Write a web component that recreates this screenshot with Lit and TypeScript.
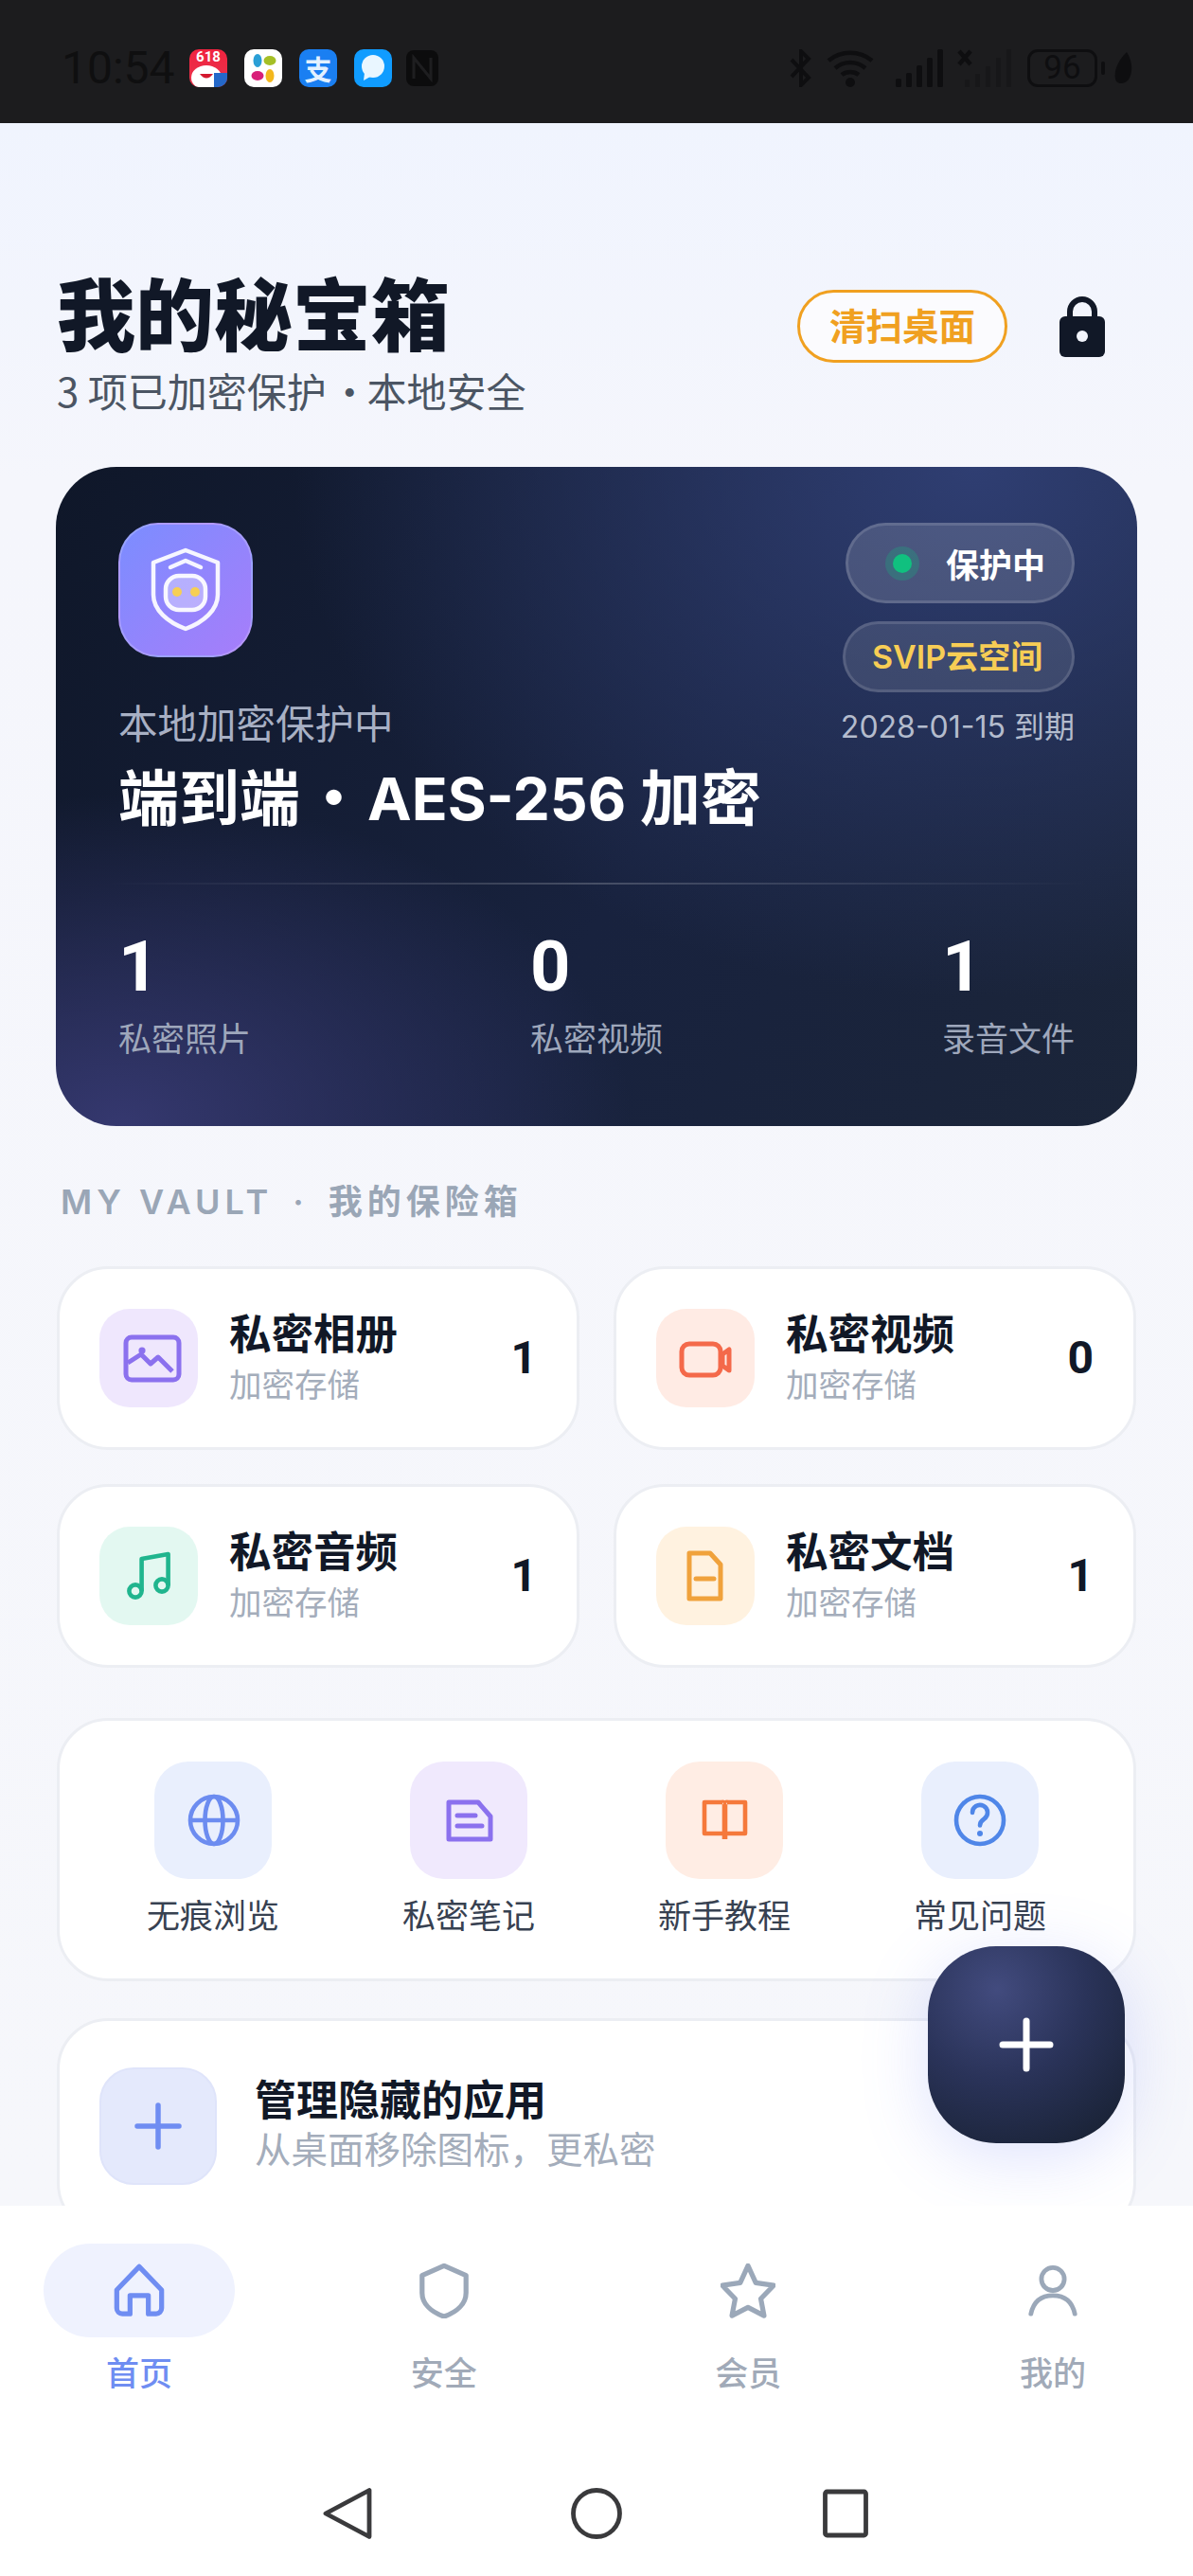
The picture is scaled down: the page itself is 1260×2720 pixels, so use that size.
import { LitElement, html, css } from "lit";
import { customElement } from "lit/decorators.js";

const vaultCards = [
  { name: "私密相册", count: "1", bg: "#efe7fd", icon: html`<svg viewBox="0 0 104 104" fill="none" stroke="#8b71ee" stroke-width="5" stroke-linejoin="round" stroke-linecap="round"><rect x="28" y="30" width="56" height="45" rx="6"/><path d="M30 57 44 48l10 10 8-7 15 15" stroke-linecap="butt"/><circle cx="45" cy="44" r="3.6" fill="#8b71ee" stroke="none"/></svg>` },
  { name: "私密视频", count: "0", bg: "#ffebe4", icon: html`<svg viewBox="0 0 104 104" fill="none" stroke="#f4694a" stroke-width="5" stroke-linejoin="round"><rect x="27" y="37" width="41" height="33" rx="8"/><path d="M70 48l7-5v22l-7-5z"/></svg>` },
  { name: "私密音频", count: "1", bg: "#e3f8f1", icon: html`<svg viewBox="0 0 104 104" fill="none" stroke="#20b58e" stroke-width="4.6" stroke-linejoin="round"><circle cx="38" cy="68" r="6.6"/><circle cx="66" cy="62" r="6.6"/><path d="M44.6 68V34L72.6 29V62"/></svg>` },
  { name: "私密文档", count: "1", bg: "#fff2e0", icon: html`<svg viewBox="0 0 104 104" fill="none" stroke="#f0a23c" stroke-width="5" stroke-linejoin="round"><path d="M35 28H57L68 40V76H35Z"/><path d="M42 55H61" stroke-linecap="round"/></svg>` },
];

const quickItems = [
  { name: "无痕浏览", bg: "#e9effd", icon: html`<svg viewBox="0 0 124 124" fill="none" stroke="#6c8cf0" stroke-width="4.6"><circle cx="63" cy="62" r="25"/><ellipse cx="63" cy="62" rx="9.5" ry="25"/><path d="M38 62H88"/></svg>` },
  { name: "私密笔记", bg: "#f0e9fd", icon: html`<svg viewBox="0 0 124 124" fill="none" stroke="#8b71ee" stroke-width="5" stroke-linejoin="round" stroke-linecap="round"><path d="M41 43H72L85 58V82H41Z"/><path d="M50 57H69M50 68H76"/></svg>` },
  { name: "新手教程", bg: "#ffede4", icon: html`<svg viewBox="0 0 124 124" fill="none" stroke="#f5793b" stroke-width="4.6" stroke-linejoin="round"><path d="M60 43H41V76H60"/><path d="M65 43H84V76H65"/><path d="M60 43Q62 42 62 46V82M65 43Q63 42 63 46V82"/></svg>` },
  { name: "常见问题", bg: "#e9effd", icon: html`<svg viewBox="0 0 124 124" fill="none" stroke="#4f86e8" stroke-width="4.6" stroke-linecap="round"><circle cx="62" cy="62" r="25"/><path d="M54 54a8 8 0 1 1 12.5 6.5c-3 2-4.5 3.5-4.5 7"/><circle cx="62" cy="76" r="3" fill="#4f86e8" stroke="none"/></svg>` },
];

const navItems = [
  { name: "首页", active: true, icon: html`<svg viewBox="0 0 60 60" fill="none" stroke="#6f8df2" stroke-width="5.4" stroke-linejoin="round"><path d="M30 3.5 5.5 29V49a6 6 0 0 0 6 6H20V35H40V55h8.5a6 6 0 0 0 6-6V29Z"/></svg>` },
  { name: "安全", active: false, icon: html`<svg viewBox="0 0 60 60" fill="none" stroke="#9ba8b9" stroke-width="5.4" stroke-linejoin="round"><path d="M30 2.5 6 13V32c0 12 10 21 24 26 14-5 24-14 24-26V13Z"/></svg>` },
  { name: "会员", active: false, icon: html`<svg viewBox="0 0 60 60" fill="none" stroke="#9ba8b9" stroke-width="5.4" stroke-linejoin="round"><path d="M30 2.5 38.5 21 58 24 44 38.5 47.5 57 30 48 12.5 57 16 38.5 2 24 21.5 21Z"/></svg>` },
  { name: "我的", active: false, icon: html`<svg viewBox="0 0 60 60" fill="none" stroke="#9ba8b9" stroke-width="5" stroke-linecap="round"><circle cx="30" cy="17" r="12.5"/><path d="M6 55C9 41 18 35 30 35S51 41 54 55"/></svg>` },
];

@customElement("app-root")
export class AppRoot extends LitElement {
  static styles = css`
    :host {
      display: flex;
      flex-direction: column;
      position: relative;
      width: 1260px;
      height: 2720px;
      overflow: hidden;
      font-family: Inter, "Noto Sans CJK SC", sans-serif;
      color: #111827;
      background: #fff;
    }
    svg { display: block; }

    /* status bar */
    .status {
      flex: 0 0 130px;
      height: 130px;
      background: #1c1c1e;
      display: flex;
      align-items: center;
      justify-content: space-between;
      padding: 14px 64px 0 65px;
      box-sizing: border-box;
    }
    .st-left, .st-right { display: flex; align-items: center; }
    .time {
      font: 400 48px/56px Roboto, sans-serif;
      color: #0f0f10;
      width: 135px;
      white-space: nowrap;
    }
    .apps { display: flex; gap: 18px; }
    .app {
      width: 40px; height: 40px; border-radius: 10px;
      position: relative;
      display: flex; align-items: center; justify-content: center;
      overflow: hidden;
    }
    .app.red {
      background: linear-gradient(180deg, #f0233f, #e8344d);
      font: 700 15px/17px Roboto, sans-serif;
      color: #fff;
      align-items: flex-start;
    }
    .bear { position: absolute; left: 0; top: 15px; }
    .app.white { background: #fff; }
    .app.blue { background: #1a7ff2; font: 700 29px/38px "Noto Sans CJK SC", sans-serif; color: #e3f1ff; }
    .app.sky { background: #109cff; }
    .nfc { margin-left: 14px; width: 36px; height: 40px; }
    .st-bt { width: 23px; height: 40px; }
    .st-wifi { width: 50px; height: 40px; margin-left: 16px; }
    .st-sig { width: 50px; height: 40px; margin-left: 23px; }
    .st-sig2 { width: 58px; height: 40px; margin-left: 15px; }
    .battery {
      width: 74px; height: 40px; margin-left: 16px;
      box-sizing: border-box;
      border: 3px solid #0e0e10;
      border-radius: 11px;
      font: 400 35px/34px Roboto, sans-serif;
      text-align: center;
      color: #0e0e10;
    }
    .nub { width: 4px; height: 14px; background: #0e0e10; margin-left: 4px; border-radius: 2px; }
    .leaf { width: 20px; height: 36px; margin-left: 9px; }

    /* scrolling content */
    .content {
      flex: 1 1 0;
      min-height: 0;
      overflow: hidden;
      box-sizing: border-box;
      padding: 153px 60px 0;
      background: linear-gradient(180deg, #f0f4fe 0, #f5f6fc 380px, #f6f7fb 100%);
    }
    .head { display: flex; justify-content: space-between; }
    h1 {
      margin: 0;
      font: 900 83px/90px "Noto Sans CJK SC", sans-serif;
      color: #111827;
    }
    .subtitle {
      margin-top: 14px;
      font: 400 42px/50px "Noto Sans CJK SC", sans-serif;
      color: #4b5563;
    }
    .sep { letter-spacing: -6px; }
    .head-actions { display: flex; align-items: center; height: 77px; margin: 23px 33px 0 0; }
    .clean {
      box-sizing: border-box;
      width: 222px; height: 77px;
      border: 3.5px solid #f0a020;
      border-radius: 39px;
      background: #fbfbfe;
      color: #f0a020;
      font: 700 38.5px/66px "Noto Sans CJK SC", sans-serif;
      text-align: center;
    }
    .lock { width: 48px; height: 64px; margin-left: 55px; }

    /* hero */
    .hero {
      margin: 56px -1px 0;
      height: 696px;
      box-sizing: border-box;
      padding: 59px 66px 0;
      border-radius: 64px;
      color: #fff;
      background:
        radial-gradient(720px 560px at 85% 0%, #2f3e72 0%, rgba(47,62,114,0) 100%),
        radial-gradient(540px 350px at 6% 100%, #35386f 0%, rgba(53,56,111,0) 100%),
        linear-gradient(120deg, #0f1729 0%, #18223e 55%, #1b2539 100%);
    }
    .hero-top { display: flex; justify-content: space-between; }
    .shield {
      box-sizing: border-box;
      width: 142px; height: 142px; border-radius: 42px;
      background: linear-gradient(135deg, #7b8dff, #a77dfa);
      border: 2px solid rgba(255,255,255,.2);
    }
    .h-sub {
      margin-top: 43px;
      font: 400 41.5px/50px "Noto Sans CJK SC", sans-serif;
      color: #a8b0c4;
    }
    .h-title {
      margin-top: 11px;
      font: 700 64px/80px "Noto Sans CJK SC", sans-serif;
      white-space: nowrap;
    }
    .latin { font: 700 62.5px/80px Inter, sans-serif; }
    .h-sep { margin: 0 -11px; }
    .hero-right { display: flex; flex-direction: column; align-items: flex-end; }
    .pill {
      box-sizing: border-box;
      display: flex; align-items: center;
      border-radius: 44px;
      border: 3px solid rgba(255,255,255,.13);
      white-space: nowrap;
    }
    .pill.safe {
      width: 242px; height: 85px; padding-left: 39px;
      background: rgba(255,255,255,.15);
      font: 600 35px/40px "Noto Sans CJK SC", sans-serif;
      color: #fff;
    }
    .dot {
      width: 20px; height: 20px; border-radius: 50%;
      background: #10c07f;
      box-shadow: 0 0 0 8px rgba(16,192,127,.25);
      margin: 0 36px 0 8px;
    }
    .pill.svip {
      margin-top: 19px;
      width: 245px; height: 75px; padding-left: 28px;
      background: rgba(255,255,255,.11);
      color: #f7cd55;
      font: 600 34px/40px Inter, "Noto Sans CJK SC", sans-serif;
    }
    .date {
      margin-top: 14px;
      font: 400 32px/46px Inter, "Noto Sans CJK SC", sans-serif;
      color: #b4bccd;
      white-space: nowrap;
    }
    .divider {
      margin: 49px -16px 0 -14px;
      height: 2px;
      background: linear-gradient(90deg, rgba(255,255,255,0), rgba(255,255,255,.2) 50%, rgba(255,255,255,0));
    }
    .stats { display: flex; justify-content: space-between; margin-top: 47px; }
    .num { font: 700 74px/80px Roboto, sans-serif; color: #fff; }
    .lbl { margin-top: 12px; font: 400 35px/44px "Noto Sans CJK SC", sans-serif; color: #9ea7bb; }

    /* vault */
    .section {
      margin: 58px 4px 0;
      font: 600 36px/44px Inter, "Noto Sans CJK SC", sans-serif;
      color: #9aa6b6;
      letter-spacing: 5px;
      white-space: nowrap;
    }
    .s-sep { margin: 0 7px; }
    .grid { margin-top: 46px; display: grid; grid-template-columns: 552px 552px; gap: 36px; }
    .card, .panel, .manage {
      background: #fff;
      border: 3px solid #eceef3;
      box-sizing: border-box;
      border-radius: 54px;
    }
    .card { height: 194px; display: flex; align-items: center; padding: 0 42px 0 42px; }
    .tile { flex: none; }
    .tile.s { width: 104px; height: 104px; border-radius: 32px; }
    .tile.l { width: 124px; height: 124px; border-radius: 36px; }
    .c-text { margin-left: 33px; flex: 1; padding-bottom: 5px; }
    .c-name { font: 600 44.5px/56px "Noto Sans CJK SC", sans-serif; color: #111827; }
    .c-sub { font: 400 34.5px/52px "Noto Sans CJK SC", sans-serif; color: #a4adbb; }
    .c-count { font: 700 48px/50px Roboto, sans-serif; color: #111827; }

    .panel {
      margin-top: 53px;
      height: 278px;
      padding-top: 43px;
      display: grid;
      grid-template-columns: repeat(4, 270px);
      justify-content: center;
    }
    .q { display: flex; flex-direction: column; align-items: center; }
    .q-name { margin-top: 15px; font: 400 35px/44px "Noto Sans CJK SC", sans-serif; color: #374151; }

    .manage {
      margin-top: 39px;
      display: flex;
      align-items: center;
      padding: 49px 42px;
    }
    .tile.plus { background: #e4e9fc; border: 2px solid #dfe4fa; box-sizing: border-box; }
    .m-text { margin-left: 40px; padding-bottom: 10px; }
    .m-name { font: 600 44px/54px "Noto Sans CJK SC", sans-serif; color: #111827; }
    .m-sub { font: 400 38.5px/50px "Noto Sans CJK SC", sans-serif; color: #a4adbb; }

    /* fab */
    .fab {
      position: absolute;
      left: 980px; top: 2055px;
      width: 208px; height: 208px;
      border-radius: 72px;
      background: radial-gradient(circle at 35% 22%, #424b7e 0%, #2a3359 45%, #1b2439 85%);
      box-shadow: 0 14px 70px rgba(105,125,245,.22);
      display: flex; align-items: center; justify-content: center;
    }
    .fab svg { width: 58px; height: 58px; }

    /* bottom */
    .bottom { flex: 0 0 391px; background: #fff; position: relative; }
    .nav { display: flex; justify-content: space-between; padding: 40px 47px 0 46px; }
    .nav-item { width: 202px; display: flex; flex-direction: column; align-items: center; }
    .nav-ic {
      width: 202px; height: 99px;
      border-radius: 50px;
      display: flex; align-items: center; justify-content: center;
    }
    .nav-ic svg { width: 58px; height: 58px; }
    .nav-item.active .nav-ic { background: #eff2fe; }
    .nav-name { margin-top: 14px; font: 500 35px/44px "Noto Sans CJK SC", sans-serif; color: #a1aab8; }
    .nav-item.active .nav-name { color: #6f8df2; }
    .sys { display: flex; justify-content: center; gap: 203px; margin-top: 101px; }
    .sys svg { width: 60px; height: 54px; }
  `;

  private statusBar() {
    return html`
      <div class="status">
        <div class="st-left">
          <div class="time">10:54</div>
          <div class="apps">
            <div class="app red">618
              <svg class="bear" width="40" height="25" viewBox="0 0 40 25"><ellipse cx="18" cy="15" rx="16" ry="13" fill="#fff"/><path d="M11 11q7 9 14 0z" fill="#d3182f"/><rect x="26" y="10" width="14" height="15" fill="#2468c9"/></svg>
            </div>
            <div class="app white">
              <svg width="34" height="34" viewBox="0 0 34 34"><ellipse cx="11" cy="9" rx="4.5" ry="7" fill="#2a9fd6"/><ellipse cx="24" cy="9" rx="6.5" ry="5" fill="#a5bf26"/><ellipse cx="11" cy="25" rx="6.5" ry="5" fill="#d81f78"/><ellipse cx="24" cy="25" rx="4.5" ry="7" fill="#f3b71c"/></svg>
            </div>
            <div class="app blue">支</div>
            <div class="app sky">
              <svg width="34" height="34" viewBox="0 0 34 34"><circle cx="17" cy="15" r="12" fill="#e9f6ff"/><path d="M8 22l-1 8 7-4z" fill="#e9f6ff"/></svg>
            </div>
          </div>
          <svg class="nfc" viewBox="0 0 36 40"><rect x="1" y="1" width="34" height="38" rx="8" fill="#0c0c0d"/><path d="M9 31V9l18 22V9" fill="none" stroke="#1e1e20" stroke-width="3"/></svg>
        </div>
        <div class="st-right">
          <svg class="st-bt" viewBox="0 0 23 40" fill="none" stroke="#0e0e10" stroke-width="4"><path d="M2 11 20 30 12 38V2L20 10 2 29"/></svg>
          <svg class="st-wifi" viewBox="0 0 50 40" fill="none" stroke="#0e0e10" stroke-width="4.5"><path d="M2 12C15 1 35 1 48 12M9 20C18 12 32 12 41 20M16 27C21 23 29 23 34 27"/><circle cx="25" cy="35" r="5" fill="#0e0e10" stroke="none"/></svg>
          <svg class="st-sig" viewBox="0 0 50 40" fill="#0e0e10"><rect x="0" y="31" width="6" height="9" rx="1.5"/><rect x="11" y="25" width="6" height="15" rx="1.5"/><rect x="22" y="17" width="6" height="23" rx="1.5"/><rect x="33" y="9" width="6" height="31" rx="1.5"/><rect x="44" y="0" width="6" height="40" rx="1.5"/></svg>
          <svg class="st-sig2" viewBox="0 0 58 40"><path d="M2 2l12 14M14 2 2 16" stroke="#0e0e10" stroke-width="4.5"/><g fill="#171719"><rect x="8" y="32" width="5" height="8"/><rect x="19" y="26" width="5" height="14"/><rect x="30" y="18" width="5" height="22"/><rect x="41" y="9" width="5" height="31"/><rect x="52" y="0" width="5" height="40"/></g></svg>
          <div class="battery">96</div>
          <div class="nub"></div>
          <svg class="leaf" viewBox="0 0 20 36"><path d="M14 1C20 10 21 22 16 30 12 35 6 35 3 32 -1 24 4 10 14 1Z" fill="#0e0e10"/></svg>
        </div>
      </div>
    `;
  }

  private hero() {
    return html`
      <section class="hero">
        <div class="hero-top">
          <div>
            <div class="shield">
              <svg viewBox="2 2 138 138" width="138" height="138" fill="none" stroke="#fff" stroke-opacity=".92" stroke-width="4.5" stroke-linecap="round" stroke-linejoin="round">
                <path d="M71 29 37 42V76C37 92 52 105 71 112 90 105 105 92 105 76V42Z"/>
                <path d="M55 47 71 40 87 47"/>
                <rect x="50" y="56" width="42" height="36" rx="14" fill="#fff" fill-opacity=".35"/>
                <circle cx="62" cy="73" r="5" fill="#f6cf54" stroke="none"/>
                <circle cx="81" cy="73" r="5" fill="#f6cf54" stroke="none"/>
              </svg>
            </div>
            <div class="h-sub">本地加密保护中</div>
            <div class="h-title">端到端<span class="h-sep"> · </span><span class="latin">AES-256</span> 加密</div>
          </div>
          <div class="hero-right">
            <div class="pill safe"><span class="dot"></span>保护中</div>
            <div class="pill svip">SVIP云空间</div>
            <div class="date">2028-01-15 到期</div>
          </div>
        </div>
        <div class="divider"></div>
        <div class="stats">
          <div><div class="num">1</div><div class="lbl">私密照片</div></div>
          <div><div class="num">0</div><div class="lbl">私密视频</div></div>
          <div><div class="num">1</div><div class="lbl">录音文件</div></div>
        </div>
      </section>
    `;
  }

  render() {
    return html`
      ${this.statusBar()}
      <main class="content">
        <header class="head">
          <div>
            <h1>我的秘宝箱</h1>
            <div class="subtitle">3 项已加密保护<span class="sep"> · </span>本地安全</div>
          </div>
          <div class="head-actions">
            <div class="clean">清扫桌面</div>
            <svg class="lock" viewBox="0 0 48 64"><path d="M11 24V16a13 13 0 0 1 26 0V24" fill="none" stroke="#111827" stroke-width="6"/><rect x="0" y="21" width="48" height="43" rx="6" fill="#111827"/><circle cx="24" cy="42" r="6" fill="#f2f4fb"/></svg>
          </div>
        </header>

        ${this.hero()}

        <div class="section">MY VAULT<span class="s-sep"> · </span>我的保险箱</div>
        <div class="grid">
          ${vaultCards.map(c => html`
            <div class="card">
              <div class="tile s" style="background:${c.bg}">${c.icon}</div>
              <div class="c-text">
                <div class="c-name">${c.name}</div>
                <div class="c-sub">加密存储</div>
              </div>
              <div class="c-count">${c.count}</div>
            </div>
          `)}
        </div>

        <div class="panel">
          ${quickItems.map(q => html`
            <div class="q">
              <div class="tile l" style="background:${q.bg}">${q.icon}</div>
              <div class="q-name">${q.name}</div>
            </div>
          `)}
        </div>

        <div class="manage">
          <div class="tile l plus">
            <svg viewBox="0 0 120 120" fill="none" stroke="#6f8df2" stroke-width="5.5" stroke-linecap="round"><path d="M60 38V82M38 60H82"/></svg>
          </div>
          <div class="m-text">
            <div class="m-name">管理隐藏的应用</div>
            <div class="m-sub">从桌面移除图标，更私密</div>
          </div>
        </div>
      </main>

      <div class="fab">
        <svg viewBox="0 0 58 58" fill="none" stroke="#fff" stroke-width="7" stroke-linecap="round"><path d="M29 4V54M4 29H54"/></svg>
      </div>

      <footer class="bottom">
        <nav class="nav">
          ${navItems.map(n => html`
            <div class="nav-item ${n.active ? "active" : ""}">
              <div class="nav-ic">${n.icon}</div>
              <div class="nav-name">${n.name}</div>
            </div>
          `)}
        </nav>
        <div class="sys">
          <svg viewBox="0 0 60 54" fill="none" stroke="#3a3a3c" stroke-width="4.8" stroke-linejoin="round"><path d="M53 2.5V51.5L7 27Z"/></svg>
          <svg viewBox="0 0 60 54" fill="none" stroke="#3a3a3c" stroke-width="4.8"><circle cx="30" cy="27" r="24.5"/></svg>
          <svg viewBox="0 0 60 54" fill="none" stroke="#3a3a3c" stroke-width="4.8" stroke-linejoin="round"><rect x="8.5" y="4" width="43" height="46" rx="2"/></svg>
        </div>
      </footer>
    `;
  }
}
